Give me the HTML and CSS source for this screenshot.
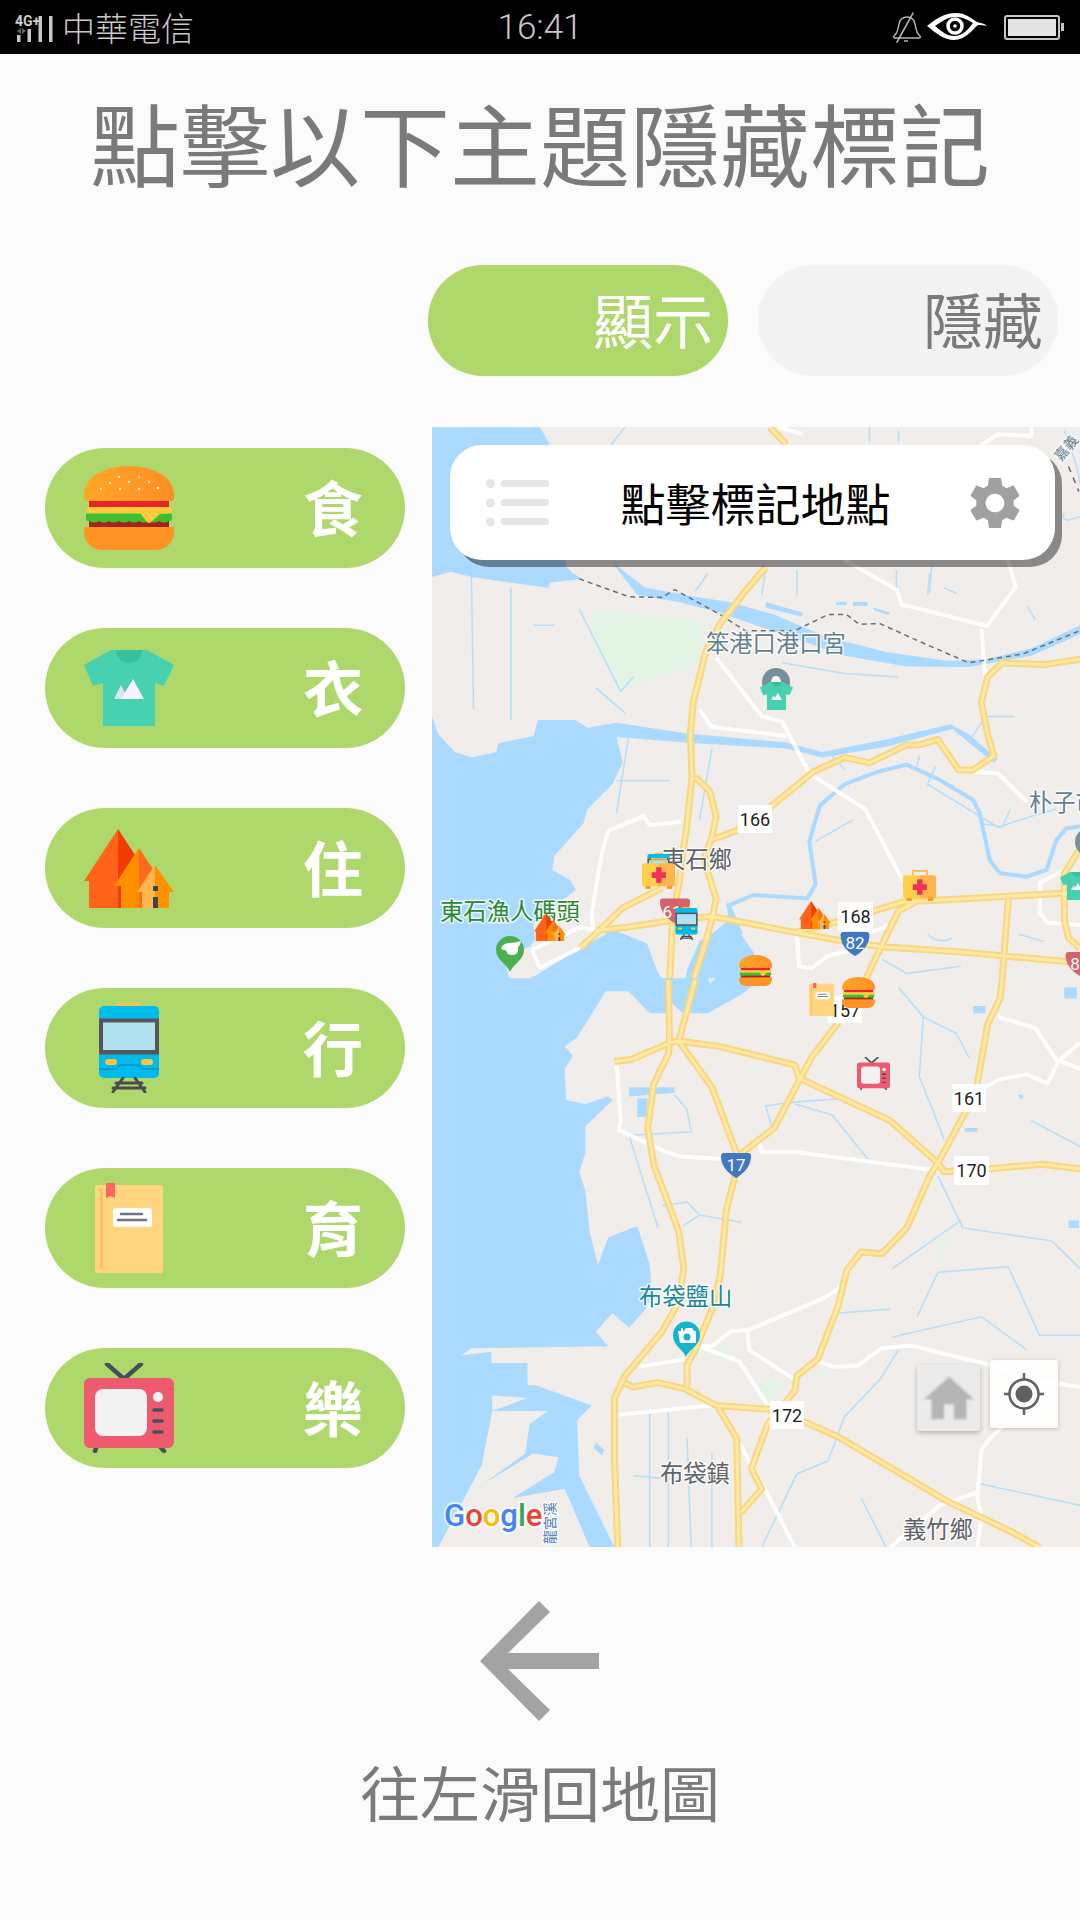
FILE: index.html
```html
<!DOCTYPE html>
<html lang="zh-Hant">
  <head>
    <meta charset="UTF-8" />
    <title>點擊以下主題隱藏標記</title>
    <link rel="stylesheet" href="styles.css">
  </head>
  <body>
    <!-- shared icons, used by the pills and by the map markers -->
    <svg class="icon-defs" aria-hidden="true">
      <defs>
        <linearGradient id="bun" x1="0" x2="1" y1="0" y2="0">
          <stop offset="0" stop-color="#ffa726" />
          <stop offset="1" stop-color="#ff8d26" />
        </linearGradient>
      </defs>
      <symbol id="ico-burger" viewBox="0 0 90 84">
        <path d="M0 29C0 10 22 0 45 0s45 10 45 29v3q0 3-3 3H3q-3 0-3-3z" fill="url(#bun)" />
        <g fill="#fff3c4">
          <circle cx="17" cy="23" r="1.2" /><circle cx="26" cy="17" r="1.2" /><circle cx="35" cy="11" r="1.2" />
          <circle cx="45" cy="16" r="1.2" /><circle cx="55" cy="11" r="1.2" /><circle cx="65" cy="16" r="1.2" />
          <circle cx="74" cy="22" r="1.2" /><circle cx="36" cy="23" r="1.2" /><circle cx="55" cy="23" r="1.2" />
        </g>
        <rect x="5" y="35" width="80" height="7" fill="#e8262a" />
        <rect x="5" y="53" width="80" height="9" fill="#a5231f" />
        <path d="M2 50q0-3 3-3h80q3 0 3 3v3q0 2-3 2q-5 3-10 0q-5 3-10 0q-5 3-10 0q-5 3-10 0q-5 3-10 0q-5 3-10 0q-5 3-10 0q-5 3-10 0q-3 0-3-2z" fill="#3cc02f" />
        <rect x="2" y="41" width="86" height="6.500" rx="3" fill="#ffcb3d" />
        <path d="M56 47h28l-8 1-9 8q-2 2-4 0z" fill="#ffcb3d" />
        <path d="M0 61h90v5c0 10-8 18-18 18H18C8 84 0 76 0 66z" fill="#ff9424" />
      </symbol>
      <symbol id="ico-shirt" viewBox="0 0 90 76">
        <path d="M27 0h36l27 15-10 21-9-3v43H19V33l-10 3L0 15z" fill="#48d1b0" />
        <path d="M32 0h26a13 13 0 0 1-26 0z" fill="#3abf9f" />
        <path d="M30 49l7-14 7 14z" fill="#dfe4ea" />
        <path d="M37 49l12-20 11 20z" fill="#f3f5fa" />
      </symbol>
      <symbol id="ico-house" viewBox="0 0 90 79">
        <path d="M34 0L0 52h5v27h29z" fill="#ff6418" />
        <path d="M34 0v79h6V52h28z" fill="#f23c00" />
        <path d="M55 19L30 57h7v22h18z" fill="#ff8f00" />
        <path d="M55 19v60h20V57h5z" fill="#ff6a1c" />
        <path d="M71 36L53 63h5v16h13z" fill="#ffb74d" />
        <path d="M71 36v43h14V63h5z" fill="#ff9100" />
        <path d="M69 57h5v5h-5zM69 68h5v11h-5z" fill="#37474f" />
      </symbol>
      <symbol id="ico-train" viewBox="0 0 90 90">
        <rect x="33" y="0" width="24" height="9" rx="1.500" fill="#fec43e" />
        <rect x="15" y="3" width="60" height="72" rx="5" fill="#00bcec" />
        <rect x="15" y="15.500" width="60" height="36" fill="#55565c" />
        <rect x="19" y="19.500" width="52" height="27.500" fill="#b2e2ef" />
        <rect x="21" y="56" width="12" height="6" rx="3" fill="#fec43e" />
        <rect x="57" y="56" width="12" height="6" rx="3" fill="#fec43e" />
        <path d="M15 66h17l4-4h18l4 4h17" fill="none" stroke="#0a8cc2" stroke-width="1.500" />
        <path d="M29 89l10-14M61 89L51 75M32 80h26M29 85h32" fill="none" stroke="#4a4a50" stroke-width="3" stroke-linecap="round" />
      </symbol>
      <symbol id="ico-book" viewBox="0 0 90 90">
        <rect x="11" y="2" width="68" height="88" rx="2" fill="#ffd67f" />
        <rect x="16" y="5" width="3" height="81" rx="1.500" fill="#ffc064" />
        <path d="M22 0h9v15l-4.500-2-4.500 2z" fill="#ff6363" />
        <rect x="29" y="25" width="39" height="19" rx="3" fill="#fff" />
        <path d="M37 31h21M34 37h28" stroke="#707487" stroke-width="2.500" stroke-linecap="round" />
      </symbol>
      <symbol id="ico-tv" viewBox="0 0 90 90">
        <path d="M23 1l17 15 17-15" fill="none" stroke="#44505a" stroke-width="4.500" stroke-linecap="round" />
        <path d="M12 85l-1 3M77 85l3 3" stroke="#44505a" stroke-width="4.500" stroke-linecap="round" />
        <rect x="0" y="15" width="90" height="70" rx="6" fill="#ef5b6e" />
        <rect x="11" y="26" width="52" height="47" rx="8" fill="#f2f2f2" />
        <circle cx="74" cy="34" r="5" fill="#f2f2f2" />
        <path d="M70 47h8M70 58h8M70 69h8" stroke="#44505a" stroke-width="3.500" stroke-linecap="round" />
      </symbol>
      <symbol id="ico-kit" viewBox="0 0 98 94">
        <path d="M29 18V5h42v13" fill="none" stroke="#ffb84d" stroke-width="5" />
        <rect x="10" y="84" width="16" height="10" fill="#f59b0b" />
        <rect x="74" y="84" width="16" height="10" fill="#f59b0b" />
        <path d="M8 18h41v68H8q-8 0-8-8V26q0-8 8-8z" fill="#ffcf4a" />
        <path d="M49 18h41q8 0 8 8v52q0 8-8 8H49z" fill="#ffb547" />
        <path d="M42 30h16v15h13v17H58v14H42V62H29V45h13z" fill="#f0325a" />
      </symbol>
      <symbol id="ico-shield" viewBox="0 0 30 25">
        <path d="M3 0h24q3 0 3 3 0 13-15 22Q0 16 0 3q0-3 3-3z" />
      </symbol>
    </svg>

    <div class="status-bar">
      <div class="status-left">
        <svg class="signal" width="56" height="44" viewBox="0 0 56 44">
          <text class="signal-text" x="15" y="24">4G+</text>
          <path d="M17 29l4-3v6zM26 29l-4 3v-6z" fill="#666" />
          <path d="M17 33h3.500v7H17zM27.500 27h3.500v13h-3.500zM38.500 14h3.500v26h-3.500zM49 14h3.500v26H49z" fill="#c8c8c8" />
        </svg>
        <span class="carrier">中華電信</span>
      </div>
      <span class="clock">16:41</span>
      <div class="status-right">
        <svg width="30" height="32" viewBox="0 0 30 32">
          <path d="M2 25c4-3 4-8 5-12 1-5 4-7 8-7s7 2 8 7c1 4 1 9 5 12 1 1 0 2-1 2H3c-1 0-2-1-1-2z" fill="none" stroke="#b5b5b5" stroke-width="1.400" />
          <path d="M21.300 1.700L4.700 31.700" stroke="#b5b5b5" stroke-width="1.600" />
          <path d="M12 30h4" stroke="#b5b5b5" stroke-width="1.500" />
        </svg>
        <svg class="eye" width="62" height="28" viewBox="0 0 62 28">
          <path d="M1 13C10 6 18 0 30 0c9 0 15 5 21 9 3 1 7 1 10 4-3-1-6-1-9-1-7 6-13 15-24 15C18 27 10 20 1 13zM9 13c6 5 12 10 19 10 8 0 14-6 19-13-5-3-10-6-17-6C21 4 15 9 9 13z" fill="#fff" />
          <circle cx="29" cy="13" r="7" fill="none" stroke="#fff" stroke-width="3.500" />
          <circle cx="29" cy="13" r="1.800" fill="#fff" />
        </svg>
        <div class="battery"><div class="battery-fill"></div></div>
        <div class="battery-nub"></div>
      </div>
    </div>

    <h1 class="page-title">點擊以下主題隱藏標記</h1>

    <div class="toggle-row">
      <div class="toggle toggle-on">顯示</div>
      <div class="toggle toggle-off">隱藏</div>
    </div>

    <div class="content">
      <div class="topics">
        <div class="topic"><svg class="topic-icon"><use href="#ico-burger" width="90" height="84" y="0" /></svg><span>食</span></div>
        <div class="topic"><svg class="topic-icon"><use href="#ico-shirt" width="90" height="76" y="4" /></svg><span>衣</span></div>
        <div class="topic"><svg class="topic-icon"><use href="#ico-house" width="90" height="79" y="3" /></svg><span>住</span></div>
        <div class="topic"><svg class="topic-icon"><use href="#ico-train" width="90" height="90" y="-3" /></svg><span>行</span></div>
        <div class="topic"><svg class="topic-icon"><use href="#ico-book" width="90" height="90" y="-3" /></svg><span>育</span></div>
        <div class="topic"><svg class="topic-icon"><use href="#ico-tv" width="90" height="90" y="-3" /></svg><span>樂</span></div>
      </div>

      <div class="map">
        <svg class="map-canvas" width="648" height="1120" viewBox="432 427 648 1120">
          <!-- north half, traced in crop coordinates -->
          <g transform="translate(430 420) scale(.4146 .3571)">
            <path class="park" d="M390 530l260 30 10 120-210 80-10-60-50-60z" />
            <g class="water">
              <path d="M5 20H265L290 70 330 412 345 430 370 445 290 455 285 470 100 440 50 425 5 440z" />
              <path d="M440 400L520 470 640 495 720 510 830 545 940 600 1000 620 1100 650 1250 675 1340 670 1450 640 1568 575V600L1450 660 1300 692 1150 690 1000 660 850 600 700 540 600 510 500 490z" />
              <path d="M5 830L20 880 60 930 100 945 160 930 165 905 250 885 260 840 350 840 380 862 450 848 620 878 860 903 945 930 1100 895 1255 852 1300 880 1370 950 1360 960 1260 865 1100 915 945 945 860 920 640 905 450 888 465 960 440 1020 380 1090 370 1130 300 1220 295 1260 338 1288 352 1316 330 1335 249 1409 253 1456 241 1475 177 1503 197 1587 257 1554 362 1479 442 1428 523 1465 547 1540 575 1600H5z" />
              <path d="M715 1345L750 1440 780 1490 800 1568 740 1600H610L620 1540 650 1460 690 1430 720 1400z" />
              <path d="M810 510l90 30-5 10-85-25zM980 510h25v8h-25zM1020 510h35v10h-35zM1070 525l40 15-5 6-35-14z" />
            </g>
            <g class="river">
              <path d="M750 1440L720 1360 780 1330 910 1340 930 1300 915 1180 940 1080 1000 1020 1080 985 1150 965 1230 1008 1310 1064 1326 1101 1350 1232 1374 1269 1439 1279 1487 1260 1511 1176 1535 1143 1568 1138" />
            </g>
            <g class="stream">
              <path d="M100 440l5 370M195 470v370M360 530l100 230 30-40M400 750l70 70M850 680l150 30 130 10M250 575h50M1240 470l30 15M1210 410l-5 75" />
              <path d="M480 880l-30 220M450 1010h130M680 920l-30 200M1020 1120l-90 60M1220 970l-20 50 170 120 80-30 60-20M1410 830l-70 0-40 70M970 940l30 40M1330 1130l50 10 20-50M1180 940l-5 30" />
              <path d="M670 430l-30 50M810 420l-10 70M885 420v70M1125 420v60M1205 430l-5 60M1440 520l20 40M1530 30l30 100 10 60M1530 260q-10 20 10 20l30-10M1060 20v40M1130 30v30M470 20l-40 60" />
              <path d="M1090 1510l60 40 130-20M1200 1440q30 30 60 10M1420 1440l60 20" />
            </g>
            <g class="road-white">
              <path d="M1000 392L1085 448 1126 476 1138 518 1165 524 1343 577 1413 468 1394 392M1330 585L1340 730M690 665L800 830 850 845 915 990 1050 1090 1140 1290M650 810L680 860 860 885M1310 985L1370 990 1440 1070M605 1125L530 1135 515 1110 430 1150 415 1210 390 1380 393 1428M246 1484L265 1534 362 1478M246 1484L362 1420 393 1428M885 1440L890 1530 920 1535 960 1500 1000 1490 1050 1440 1110 1415M1532 1260L1471 1296 1471 1380 1489 1408 1568 1414M1330 70L1370 40 1450 45 1450 20M900 40L840 20" />
            </g>
            <path class="dashes" d="M360 445L480 495 560 497 590 475 700 545 760 590 880 590 960 545 1005 545 1035 572 1085 570 1180 620 1300 680 1430 655 1568 590" />
            <path class="dashes-dark" d="M1540 130l25 70" />
            <g class="road-casing"><path id="ha" d="M820 20L860 70M810 412L760 480 700 570 665 650 635 790 628 880 632 1000 620 1130 600 1300 585 1400 578 1568M640 1000L675 1040 690 1110 680 1170 660 1230 690 1340 680 1400 655 1500 635 1568M680 1175L740 1150 830 1075 925 985 1000 945 1060 960 1150 910 1180 910 1225 895 1275 980 1310 980 1360 940 1345 880 1330 790 1345 720 1380 680 1480 685 1568 670M362 1478L410 1428 465 1366 560 1310M400 1430L480 1420 590 1400 680 1390 770 1410 880 1435 1000 1460 1090 1475 1280 1490 1568 1520M880 1435L1000 1400 1140 1350 1300 1340 1530 1325 1568 1330M1170 1350L1130 1375 1090 1470 1050 1568M1395 1340L1380 1568M1568 1200L1530 1270 1530 1400 1540 1450 1568 1480" /></g>
            <g class="road-fill"><use href="#ha" /></g>
          </g>

          <!-- south half -->
          <g transform="translate(430 980) scale(.4146 .37)">
            <g class="water">
              <path d="M5 -5H800L750 40 670 90 610 90 585 65 575 90 530 90 470 20 430 20 380 110 355 155 325 180 345 205 325 240 328 325 375 335 430 315 440 325 375 395 375 465 360 520 375 570 385 680 405 770 430 695 500 665 530 770 535 850 520 890 480 940 440 900 400 950 430 990 100 995 75 1015 148 1005 148 1035 235 1035 235 1095 255 1095 235 1130 150 1122 150 1165 125 1310 20 1533H5z" />
              <path d="M235 1130L255 1095 390 1150 355 1190 360 1340 445 1533H385L325 1375 200 1400 300 1330 310 1290 250 1280 130 1360 230 1280 240 1200 285 1165 150 1165z" />
              <path d="M480 290h110v15l-110 10zM500 320h25l-5 50h-20zM400 1250l20 20-5 15-20-20z" />
              <path d="M1310 70h30v20h-30zM1420 310h10v10h-10zM1290 400h30v10h-30zM1540 650h25v20h-25zM1530 20h30v30h-30z" />
            </g>
            <path class="park" d="M680 1000l40-15 5 30-25 5zM785 1100l40-30 25 20-30 50-15 5zM1228 695h20v30h-20zM1215 730h20l8 50zM1075 890l25-30-5 30zM920 1060h50l-15 20zM670 -5h20l-15 15z" />
            <g class="stream">
              <path d="M480 420L550 670M480 420L630 410 620 350 590 310M610 665L650 635 750 655M650 635L620 600 560 610M1000 320L880 330 810 340 825 400M970 365L1060 490M880 335L970 365M1190 100L1270 145 1300 210M1225 530L1285 670 1500 705 1568 780M1280 650L1115 780M1225 790L1395 775 1470 960 1568 960M1225 790L1175 910M1115 965L1330 910 1440 1000M985 900L1110 890M1130 1000L1085 1080 1000 1180 960 1300 885 1335 800 1533M1320 1360L1568 1420M490 1340L700 1360M530 1170V1533M575 1170V1533M680 1280V1533M620 1240L630 1533M1100 1533L1040 1400M1450 380L1568 450M1130 20L1190 100 1180 260 1240 430" />
            </g>
            <g class="road-white">
              <path d="M450 225L460 380 455 405 570 465 610 478 700 483M795 440L800 465 880 465 1225 515M990 830L950 860 770 945 725 950 680 990 650 990 745 1030 780 1090 815 1150M765 945L770 1000 880 1080M505 1045L615 1025M455 1175L680 1150M745 1250L810 1380 880 1533M935 1030L970 1045 1030 1043 1090 995 1160 988 1350 1040 1450 1080 1568 1100M1430 1150L1350 1240 1330 1270 1320 1400 1330 1450 1320 1533M1320 1385L1230 1420 1110 1533M1370 100L1460 130 1510 215 1568 240M1340 290L1370 270 1440 255 1490 280 1515 220 1568 170" />
            </g>
            <g class="road-casing"><path id="hb" d="M575 0L578 170 575 200 540 280 525 400 540 500 600 680 612 780 600 870 560 950 470 1070 445 1130 445 1300 453 1533M640 0L600 165 680 290 740 470M445 220L485 215 578 170 600 165 700 180 880 230 890 265 1110 380 1225 495 1240 518 1350 510 1475 498 1568 510M985 115L920 210 830 400 750 470 715 620 700 800 680 890 640 1000 620 1040 620 1100M1380 0L1375 50 1345 120 1320 280 1290 360 1225 495 1205 530 1150 670 1090 740 1040 735 1005 785 985 880 935 1025 885 1070 880 1110 815 1200 775 1320 800 1375 750 1440M470 1090L490 1100 550 1088 615 1105 690 1150 815 1160 905 1195 985 1235 1250 1410 1400 1490 1470 1533M695 1155L740 1240 745 1533" /></g>
            <g class="road-fill"><use href="#hb" /></g>
          </g>

          <!-- road plates -->
          <g class="plate"><rect x="738" y="805" width="34" height="28" /><text x="755" y="826">166</text></g>
          <g class="plate"><rect x="838" y="902" width="35" height="29" /><text x="855.500" y="923">168</text></g>
          <g class="plate"><rect x="828" y="996" width="34" height="27" /><text x="845" y="1017">157</text></g>
          <g class="plate"><rect x="952" y="1084" width="34" height="28" /><text x="969" y="1105">161</text></g>
          <g class="plate"><rect x="954" y="1156" width="35" height="29" /><text x="971.500" y="1177">170</text></g>
          <g class="plate"><rect x="770" y="1401" width="34" height="28" /><text x="787" y="1422">172</text></g>

          <!-- road shields -->
          <use href="#ico-shield" class="shield-red" x="660" y="898" width="30" height="26" />
          <text class="shield-text" x="672" y="918">61</text>
          <use href="#ico-shield" class="shield-blue" x="840" y="932" width="30" height="24" />
          <text class="shield-text" x="855" y="949">82</text>
          <use href="#ico-shield" class="shield-blue" x="721" y="1153" width="30" height="25" />
          <text class="shield-text" x="736" y="1171">17</text>
          <use href="#ico-shield" class="shield-red" x="1065" y="952" width="30" height="24" />
          <text class="shield-text" x="1075" y="970">8</text>

          <!-- labels -->
          <text class="label label-slate" x="706" y="652">笨港口港口宮</text>
          <text class="label label-grey" x="662" y="868">東石鄉</text>
          <text class="label label-green" x="440" y="920">東石漁人碼頭</text>
          <text class="label label-slate" x="1029" y="811">朴子市</text>
          <text class="label label-teal" x="639" y="1305">布袋鹽山</text>
          <text class="label label-grey" x="660" y="1482">布袋鎮</text>
          <text class="label label-grey" x="903" y="1538">義竹鄉</text>
          <text class="label-small label-blue" transform="translate(555 1544) rotate(-90)">龍宮溪</text>
          <text class="label-small label-slate" transform="translate(1061 462) rotate(-50)">嘉義</text>

          <text class="google" x="444" y="1526"><tspan fill="#4285f4">G</tspan><tspan fill="#ea4335">o</tspan><tspan fill="#fbbc05">o</tspan><tspan fill="#4285f4">g</tspan><tspan fill="#34a853">l</tspan><tspan fill="#ea4335">e</tspan></text>

          <!-- place pins -->
          <path d="M510 972c-3-8-14-12-14-22a14 14 0 0 1 28 0c0 10-11 14-14 22z" fill="#4caf50" />
          <path d="M501 948q3-5 8-5 6 0 12-2-1 5-3 6 1 8-6 8-5 0-6-5-3 1-5-2z" fill="#fff" />
          <path d="M686 1357c-3-8-13-11-13-22a13.500 13.500 0 0 1 27 0c0 11-11 14-14 22z" fill="#12b5cb" />
          <path d="M678 1331h3v-3h2v3h1l2-3h6l2 3h2v12h-16z" fill="#fff" />
          <circle cx="687" cy="1337" r="3.500" fill="#12b5cb" />
          <circle cx="776" cy="682" r="14" fill="#78909c" />
          <path d="M771 684q0-8 5-8t5 8z" fill="#fff" />
          <circle cx="1089" cy="842" r="14" fill="#78909c" />

          <!-- topic markers -->
          <use href="#ico-train" x="642" y="853" width="33" height="33" />
          <use href="#ico-shirt" x="760" y="682" width="33" height="28" />
          <use href="#ico-kit" x="642" y="857" width="33" height="32" />
          <use href="#ico-house" x="534" y="913" width="32" height="28" />
          <use href="#ico-train" x="670" y="907" width="33" height="33" />
          <use href="#ico-house" x="799" y="901" width="32" height="28" />
          <use href="#ico-kit" x="903" y="869" width="33" height="32" />
          <use href="#ico-shirt" x="1060" y="872" width="33" height="28" />
          <use href="#ico-burger" x="739" y="955" width="33" height="31" />
          <use href="#ico-book" x="805" y="983" width="33" height="33" />
          <use href="#ico-burger" x="842" y="977" width="33" height="31" />
          <use href="#ico-tv" x="857" y="1057" width="33" height="33" />
        </svg>

        <div class="search-card">
          <svg class="menu-icon" width="63" height="47" viewBox="0 0 63 47">
            <circle cx="4.500" cy="4.500" r="4.500" /><circle cx="4.500" cy="24" r="4.500" /><circle cx="4.500" cy="43" r="4.500" />
            <rect x="14.500" y="1" width="49" height="7" rx="3.500" /><rect x="14.500" y="20" width="49" height="7" rx="3.500" /><rect x="14.500" y="39" width="49" height="7" rx="3.500" />
          </svg>
          <span class="search-title">點擊標記地點</span>
          <svg class="gear-icon" width="50" height="52" viewBox="2.500 2 19 20">
            <path d="M19.140 12.940c.04-.3.06-.61.06-.94 0-.32-.02-.64-.07-.94l2.030-1.580a.49.49 0 0 0 .12-.61l-1.920-3.320a.488.488 0 0 0-.59-.22l-2.390.96c-.5-.38-1.030-.7-1.620-.94l-.36-2.540a.484.484 0 0 0-.48-.41h-3.840c-.24 0-.43.17-.47.41l-.36 2.540c-.59.24-1.130.57-1.620.94l-2.390-.96c-.22-.08-.47 0-.59.22L2.740 8.870c-.12.21-.08.47.12.61l2.030 1.580c-.05.3-.09.63-.09.94s.02.64.07.94l-2.030 1.580a.49.49 0 0 0-.12.61l1.920 3.320c.12.22.37.29.59.22l2.390-.96c.5.38 1.030.7 1.620.94l.36 2.54c.05.24.24.41.48.41h3.840c.24 0 .44-.17.47-.41l.36-2.540c.59-.24 1.130-.56 1.620-.94l2.390.96c.22.08.47 0 .59-.22l1.920-3.320c.12-.22.07-.47-.12-.61l-2.010-1.580zM12 15.600c-1.980 0-3.600-1.620-3.600-3.600s1.620-3.600 3.600-3.600 3.600 1.620 3.600 3.600-1.620 3.600-3.600 3.600z" />
          </svg>
        </div>

        <div class="map-btn home-btn">
          <svg class="home-icon" width="50" height="48" viewBox="2 3 20 17"><path d="M10 20v-6h4v6h5v-8h3L12 3 2 12h3v8z" /></svg>
        </div>
        <div class="map-btn locate-btn">
          <svg width="40" height="44" viewBox="0 0 40 44">
            <circle cx="20" cy="22" r="14.500" fill="none" stroke="#616161" stroke-width="2.500" />
            <circle cx="20" cy="22" r="8.500" fill="#616161" />
            <path d="M20 1v7M20 36v7M0 22h6M34 22h6" stroke="#616161" stroke-width="2.500" />
          </svg>
        </div>
      </div>
    </div>

    <div class="swipe-hint">
      <svg width="120" height="120" viewBox="0 0 120 120">
        <path d="M59 0l11 11-42 41h91v16H28l42 41-11 11L0 60z" />
      </svg>
      <div class="swipe-text">往左滑回地圖</div>
    </div>
  </body>
</html>
```

FILE: styles.css
```css
body {
  margin: 0;
  width: 1080px;
  height: 1920px;
  overflow: hidden;
  background-color: #fbfbfb;
  font-family: "Noto Sans CJK TC", "Noto Sans", sans-serif;
  display: flex;
  flex-direction: column;
}

.icon-defs {
  position: absolute;
  width: 0;
  height: 0;
}

/* status bar */
.status-bar {
  height: 54px;
  flex-shrink: 0;
  background-color: #000;
  color: #c8c8c8;
  display: grid;
  grid-template-columns: 1fr auto 1fr;
  align-items: center;
}

.status-left {
  display: flex;
  align-items: center;
  gap: 6px;
  height: 54px;
}

.signal {
  margin-bottom: 6px;
}

.signal-text {
  font-family: "Roboto", sans-serif;
  font-size: 14px;
  font-weight: 700;
  fill: #ccc;
}

.carrier {
  font-size: 33px;
  line-height: 54px;
  font-weight: 300;
}

.clock {
  font-family: "Roboto", sans-serif;
  font-size: 35px;
  font-weight: 300;
}

.status-right {
  display: flex;
  align-items: center;
  justify-content: flex-end;
  padding-right: 16px;
}

.status-right svg {
  margin-right: 4px;
}

.status-right .eye {
  margin-right: 16px;
}

.battery {
  width: 56px;
  height: 25px;
  box-sizing: border-box;
  border: 2px solid #c8c8c8;
  border-radius: 3px;
  padding: 2px;
}

.battery-fill {
  height: 100%;
  background-color: #e4e4e4;
}

.battery-nub {
  width: 3px;
  height: 8px;
  margin-left: 1px;
  background-color: #c8c8c8;
}

/* heading and toggle */
.page-title {
  margin: 42px 0 0;
  font-size: 90px;
  line-height: 90px;
  font-weight: 400;
  color: #7a7a7a;
  text-align: center;
}

.toggle-row {
  display: flex;
  justify-content: flex-end;
  gap: 30px;
  margin-top: 79px;
  padding-right: 22px;
}

.toggle {
  width: 300px;
  height: 111px;
  box-sizing: border-box;
  border-radius: 55px;
  padding-right: 15px;
  font-size: 60px;
  line-height: 106px;
  text-align: right;
}

.toggle-on {
  background-color: #aed86b;
  color: #fff;
}

.toggle-off {
  background-color: #f3f3f3;
  color: #7a7a7a;
}

/* topics + map */
.content {
  display: flex;
  margin-top: 51px;
}

.topics {
  width: 360px;
  margin-left: 45px;
  padding-top: 21px;
  display: flex;
  flex-direction: column;
  gap: 60px;
}

.topic {
  height: 120px;
  border-radius: 60px;
  background-color: #aed86b;
  display: flex;
  align-items: center;
  justify-content: space-between;
  padding: 0 42px 0 39px;
  color: #fff;
  font-size: 60px;
  font-weight: 700;
}

.topic span {
  margin-bottom: 5px;
}

.topic-icon {
  width: 90px;
  height: 84px;
  overflow: visible;
}

.map {
  position: relative;
  width: 648px;
  height: 1120px;
  margin-left: 27px;
  overflow: hidden;
  background-color: #f0edea;
}

.map-canvas {
  display: block;
}

.map-canvas path {
  vector-effect: non-scaling-stroke;
}

.water path {
  fill: #aadaff;
}

.park {
  fill: #e4f4e4;
}

.river path {
  fill: none;
  stroke: #aadaff;
  stroke-width: 4px;
}

.stream path {
  fill: none;
  stroke: #b4dffc;
  stroke-width: 1.500px;
}

.road-white path {
  fill: none;
  stroke: #fff;
  stroke-width: 4px;
  stroke-linejoin: round;
}

.road-casing {
  fill: none;
  stroke: #fad67c;
  stroke-width: 7px;
  stroke-linejoin: round;
}

.road-fill {
  fill: none;
  stroke: #fee9a8;
  stroke-width: 3px;
  stroke-linejoin: round;
}

.dashes {
  fill: none;
  stroke: #6f6f6f;
  stroke-width: 1.500px;
  stroke-dasharray: 5 4;
}

.dashes-dark {
  fill: none;
  stroke: #666;
  stroke-width: 1.500px;
  stroke-dasharray: 6 6;
}

.plate rect {
  fill: #fff;
}

.plate text {
  font-family: "Roboto", sans-serif;
  font-size: 18px;
  fill: #222;
  text-anchor: middle;
}

.shield-red {
  fill: #d6626a;
}

.shield-blue {
  fill: #3f78c5;
}

.shield-text {
  font-family: "Roboto", sans-serif;
  font-size: 17px;
  fill: #fff;
  text-anchor: middle;
}

.label,
.label-small {
  paint-order: stroke;
  stroke: rgba(255, 255, 255, 0.8);
  stroke-width: 3px;
  stroke-linejoin: round;
}

.label {
  font-size: 23.300px;
}

.label-small {
  font-size: 14px;
}

.label-slate {
  fill: #64808c;
}

.label-grey {
  fill: #5f6368;
}

.label-green {
  fill: #2c8a2c;
}

.label-teal {
  fill: #18899a;
}

.label-blue {
  fill: #4a7fb5;
}

.google {
  font-family: "Roboto", sans-serif;
  font-size: 31px;
  font-weight: 500;
  paint-order: stroke;
  stroke: rgba(255, 255, 255, 0.7);
  stroke-width: 4px;
  stroke-linejoin: round;
}

/* card over the map */
.search-card {
  position: absolute;
  left: 18px;
  top: 18px;
  width: 605px;
  height: 115px;
  box-sizing: border-box;
  padding: 0 35px 0 36px;
  border-radius: 32px;
  background-color: #fff;
  box-shadow: 7px 7px 0 rgba(0, 0, 0, 0.42);
  display: flex;
  align-items: center;
  justify-content: space-between;
}

.menu-icon {
  fill: #e6e6e6;
}

.search-title {
  font-size: 45px;
  color: #000;
  margin-right: 8px;
}

.gear-icon {
  fill: #a0a0a0;
}

.map-btn {
  position: absolute;
  display: flex;
  align-items: center;
  justify-content: center;
  border-radius: 3px;
}

.home-btn {
  left: 485px;
  top: 938px;
  width: 63px;
  height: 66px;
  background-color: rgba(235, 235, 235, 0.95);
  box-shadow: 0 2px 5px rgba(0, 0, 0, 0.25);
}

.home-icon {
  fill: #b5b5b5;
  filter: blur(1px);
}

.locate-btn {
  left: 558px;
  top: 933px;
  width: 68px;
  height: 68px;
  background-color: rgba(255, 255, 255, 0.85);
  box-shadow: 0 1px 4px rgba(0, 0, 0, 0.2);
}

/* footer hint */
.swipe-hint {
  margin-top: 54px;
  display: flex;
  flex-direction: column;
  align-items: center;
}

.swipe-hint svg {
  fill: #a3a3a3;
}

.swipe-text {
  margin-top: 30px;
  font-size: 60px;
  line-height: 80px;
  color: #7a7a7a;
}
```
